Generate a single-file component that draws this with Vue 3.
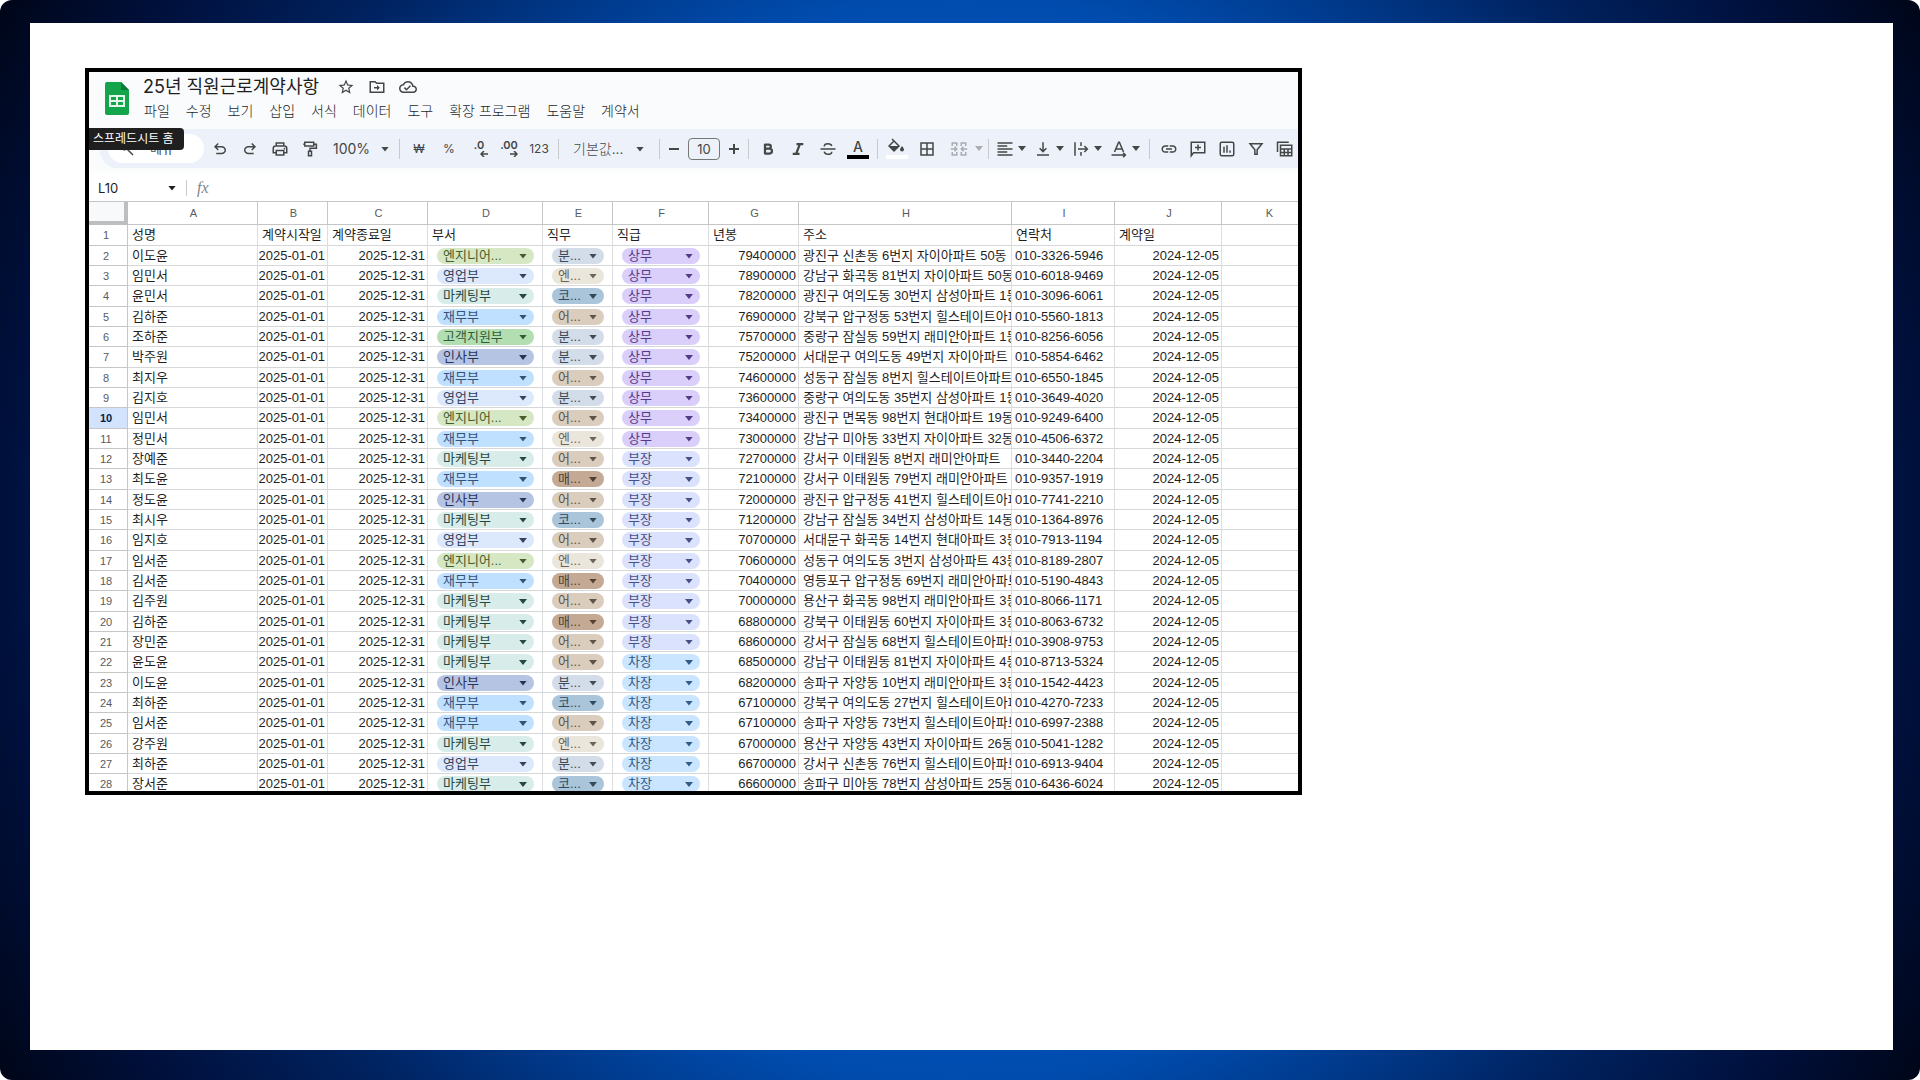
<script setup>
import { h } from 'vue'

const menus = ['파일', '수정', '보기', '삽입', '서식', '데이터', '도구', '확장 프로그램', '도움말', '계약서']

const icons = {
  star: { f: 'M22 9.24l-7.19-.62L12 2 9.19 8.63 2 9.24l5.46 4.73L5.82 21 12 17.27 18.18 21l-1.63-7.03L22 9.24zM12 15.4l-3.76 2.27 1-4.28-3.32-2.88 4.38-.38L12 6.1l1.71 4.04 4.38.38-3.32 2.88 1 4.28L12 15.4z' },
  move: { s: 'M3 5h6.5l2 2H21v12H3z', f: 'M12 9.2l3.8 3.8-3.8 3.8v-2.8H8v-2h4z' },
  cloud: { f: 'M19.35 10.04C18.67 6.59 15.64 4 12 4 9.11 4 6.6 5.64 5.35 8.04 2.34 8.36 0 10.91 0 14c0 3.31 2.69 6 6 6h13c2.76 0 5-2.24 5-5 0-2.64-2.05-4.78-4.65-4.96zM19 18H6c-2.21 0-4-1.79-4-4 0-2.05 1.53-3.76 3.56-3.97l1.07-.11.5-.95C8.08 7.14 9.94 6 12 6c2.62 0 4.88 1.86 5.39 4.43l.3 1.5 1.53.11c1.56.1 2.78 1.41 2.78 2.96 0 1.65-1.35 3-3 3zm-9-3.82l-2.09-2.09L6.5 13.5 10 17l6.01-6.01-1.41-1.41z' },
  search: { s: 'M12 12l8 8M13 8.5a4.5 4.5 0 1 1-9 0 4.5 4.5 0 0 1 9 0z' },
  undo: { f: 'M7 19v-2h7.1q1.575 0 2.738-1T18 13.5 16.838 11 14.1 10H7.8l2.6 2.6L9 14 4 9l5-5 1.4 1.4L7.8 8h6.3q2.425 0 4.163 1.575T20 13.5t-1.737 3.925T14.1 19z' },
  redo: { f: 'M17 19v-2H9.9q-1.575 0-2.738-1T6 13.5 7.162 11 9.9 10h6.3l-2.6 2.6L15 14l5-5-5-5-1.4 1.4L16.2 8H9.9Q7.475 8 5.737 9.575T4 13.5t1.737 3.925T9.9 19z' },
  print: { s: 'M7 8V4h10v4M7 17H3v-6q0-3 3-3h12q3 0 3 3v6h-4M7 14h10v6H7z', f: 'M17 10.5h2v2h-2z' },
  paint: { s: 'M5 3h12v5H5zM17 5.5h3.5V11H12v4M10 15h4v6h-4zM5 5.5H3' },
  bold: { s: 'M8 5v14M8 6h5a2.7 2.7 0 0 1 0 5.5H8M8 11.5h6a3.2 3.2 0 0 1 0 6.5H8', w: 3 },
  italic: { s: 'M10 5.5h9M5 18.5h9M14.5 5.5l-5 13', w: 3 },
  strike: { s: 'M2 12h20M17 8c-.5-2-2.5-3-5-3s-5 1-5 3.5M7 15.5c.5 2.5 2.5 3.5 5 3.5s5-1 5-3.5' },
  borders: { s: 'M4 4h16v16H4zM12 4v16M4 12h16' },
  merge: { s: 'M3 8V4h6v4M15 8V4h6v4M3 16v4h6v-4M15 16v4h6v-4M1 12h8M6 9l3 3-3 3M23 12h-8M18 9l-3 3 3 3' },
  align: { s: 'M2 4h20M2 8h13M2 12h20M2 16h13M2 20h20' },
  valign: { s: 'M4 20h16M12 3v12M7.5 11l4.5 4.5 4.5-4.5' },
  wrap: { s: 'M4 3v18M12 3v5M12 16v5M8 12h12M16.5 8l4 4-4 4' },
  rotate: { s: 'M6 16l5.5-13h1L18 16M8 12h8M2 20h18M17.5 17l3 3-3 3' },
  link: { f: 'M3.9 12c0-1.71 1.39-3.1 3.1-3.1h4V7H7c-2.76 0-5 2.24-5 5s2.24 5 5 5h4v-1.9H7c-1.71 0-3.1-1.39-3.1-3.1zM8 13h8v-2H8v2zm9-6h-4v1.9h4c1.71 0 3.1 1.39 3.1 3.1s-1.39 3.1-3.1 3.1h-4V17h4c2.76 0 5-2.24 5-5s-2.24-5-5-5z' },
  comment: { s: 'M3 21V3h18v14H6zM12 6v8M8 10h8' },
  chart: { s: 'M5 3h14q2 0 2 2v14q0 2-2 2H5q-2 0-2-2V5q0-2 2-2zM8 9v8M12 7v10M16 14v3' },
  filter: { s: 'M4 5h16l-6.5 8v6h-3v-6z' },
  views: { s: 'M2 16V3h15M6 7h15v14H6zM6 12h15M6 16.5h15M11 12v9M16 12v9' }
}

// One SVG wrapper shared by every toolbar glyph.
const Icon = ({ name }) => {
  const { f, s, w } = icons[name]
  return h('svg', { viewBox: '0 0 24 24', width: 18, height: 18, 'aria-hidden': 'true' }, [
    f && h('path', { d: f, fill: 'currentColor' }),
    s && h('path', { d: s, fill: 'none', stroke: 'currentColor', 'stroke-width': w || 2 })
  ])
}
Icon.props = ['name']

const history = ['undo', 'redo', 'print', 'paint']
const drops = ['align', 'valign', 'wrap', 'rotate']
const inserts = ['link', 'comment', 'chart', 'filter', 'views']

const deptTone = { '엔지니어...': 'lime', 영업부: 'sky', 마케팅부: 'mint', 재무부: 'azure', 고객지원부: 'green', 인사부: 'indigo' }
const jobTone = { '분...': 'steel', '엔...': 'cream', '코...': 'ocean', '어...': 'sand', '매...': 'brown' }
const rankTone = { 상무: 'violet', 부장: 'periwinkle', 차장: 'blue' }

const columns = ['A', 'B', 'C', 'D', 'E', 'F', 'G', 'H', 'I', 'J', 'K']
const titles = ['성명', '계약시작일', '계약종료일', '부서', '직무', '직급', '년봉', '주소', '연락처', '계약일', '']

const people = [
  ['이도윤', '엔지니어...', '분...', '상무', '79400000', '광진구 신촌동 6번지 자이아파트 50동', '010-3326-5946'],
  ['임민서', '영업부', '엔...', '상무', '78900000', '강남구 화곡동 81번지 자이아파트 50동', '010-6018-9469'],
  ['윤민서', '마케팅부', '코...', '상무', '78200000', '광진구 여의도동 30번지 삼성아파트 1동', '010-3096-6061'],
  ['김하준', '재무부', '어...', '상무', '76900000', '강북구 압구정동 53번지 힐스테이트아파트', '010-5560-1813'],
  ['조하준', '고객지원부', '분...', '상무', '75700000', '중랑구 잠실동 59번지 래미안아파트 1동', '010-8256-6056'],
  ['박주원', '인사부', '분...', '상무', '75200000', '서대문구 여의도동 49번지 자이아파트', '010-5854-6462'],
  ['최지우', '재무부', '어...', '상무', '74600000', '성동구 잠실동 8번지 힐스테이트아파트', '010-6550-1845'],
  ['김지호', '영업부', '분...', '상무', '73600000', '중랑구 여의도동 35번지 삼성아파트 1동', '010-3649-4020'],
  ['임민서', '엔지니어...', '어...', '상무', '73400000', '광진구 면목동 98번지 현대아파트 19동', '010-9249-6400'],
  ['정민서', '재무부', '엔...', '상무', '73000000', '강남구 미아동 33번지 자이아파트 32동', '010-4506-6372'],
  ['장예준', '마케팅부', '어...', '부장', '72700000', '강서구 이태원동 8번지 래미안아파트', '010-3440-2204'],
  ['최도윤', '재무부', '매...', '부장', '72100000', '강서구 이태원동 79번지 래미안아파트', '010-9357-1919'],
  ['정도윤', '인사부', '어...', '부장', '72000000', '광진구 압구정동 41번지 힐스테이트아파트', '010-7741-2210'],
  ['최시우', '마케팅부', '코...', '부장', '71200000', '강남구 잠실동 34번지 삼성아파트 14동', '010-1364-8976'],
  ['임지호', '영업부', '어...', '부장', '70700000', '서대문구 화곡동 14번지 현대아파트 3동', '010-7913-1194'],
  ['임서준', '엔지니어...', '엔...', '부장', '70600000', '성동구 여의도동 3번지 삼성아파트 43동', '010-8189-2807'],
  ['김서준', '재무부', '매...', '부장', '70400000', '영등포구 압구정동 69번지 래미안아파트', '010-5190-4843'],
  ['김주원', '마케팅부', '어...', '부장', '70000000', '용산구 화곡동 98번지 래미안아파트 3동', '010-8066-1171'],
  ['김하준', '마케팅부', '매...', '부장', '68800000', '강북구 이태원동 60번지 자이아파트 3동', '010-8063-6732'],
  ['장민준', '마케팅부', '어...', '부장', '68600000', '강서구 잠실동 68번지 힐스테이트아파트', '010-3908-9753'],
  ['윤도윤', '마케팅부', '어...', '차장', '68500000', '강남구 이태원동 81번지 자이아파트 4동', '010-8713-5324'],
  ['이도윤', '인사부', '분...', '차장', '68200000', '송파구 자양동 10번지 래미안아파트 3동', '010-1542-4423'],
  ['최하준', '재무부', '코...', '차장', '67100000', '강북구 여의도동 27번지 힐스테이트아파트', '010-4270-7233'],
  ['임서준', '재무부', '어...', '차장', '67100000', '송파구 자양동 73번지 힐스테이트아파트', '010-6997-2388'],
  ['강주원', '마케팅부', '엔...', '차장', '67000000', '용산구 자양동 43번지 자이아파트 26동', '010-5041-1282'],
  ['최하준', '영업부', '분...', '차장', '66700000', '강서구 신촌동 76번지 힐스테이트아파트', '010-6913-9404'],
  ['장서준', '마케팅부', '코...', '차장', '66600000', '송파구 미아동 78번지 삼성아파트 25동', '010-6436-6024']
].map(([name, dept, job, rank, pay, address, phone]) => ({
  name, pay, address, phone,
  chips: [
    { label: '부서', text: dept, tone: deptTone[dept] },
    { label: '직무', text: job, tone: jobTone[job] },
    { label: '직급', text: rank, tone: rankTone[rank] }
  ]
}))
</script>

<template>
  <div class="backdrop">
    <main class="slide">
      <section class="sheet">
        <header class="head">
          <a class="home" href="#" aria-label="스프레드시트 홈">
            <svg viewBox="0 0 24 33" width="24" height="33" aria-hidden="true">
              <path d="M2 0h14l8 8v23q0 2-2 2H2q-2 0-2-2V2q0-2 2-2z" fill="#12a54c" />
              <path d="M16 0l8 8h-8z" fill="#0b7c38" />
              <path d="M4 13h16v12H4zM6 15v3h5v-3zM13 15v3h5v-3zM6 20v3h5v-3zM13 20v3h5v-3z" fill="#e4f6ea" fill-rule="evenodd" />
            </svg>
          </a>
          <span class="tip" role="tooltip">스프레드시트 홈</span>
          <div class="heading">
            <div class="title-row">
              <h1>25년 직원근로계약사항</h1>
              <button type="button" aria-label="별표"><Icon name="star" /></button>
              <button type="button" aria-label="이동"><Icon name="move" /></button>
              <button type="button" aria-label="저장 상태"><Icon name="cloud" /></button>
            </div>
            <nav class="menus">
              <button v-for="m in menus" :key="m" type="button">{{ m }}</button>
            </nav>
          </div>
        </header>

        <div class="toolbar">
          <label class="finder">
            <Icon name="search" />
            <input type="text" placeholder="메뉴" aria-label="메뉴 검색">
          </label>
          <button v-for="n in history" :key="n" class="tool" type="button" :aria-label="n"><Icon :name="n" /></button>
          <span class="pick zoom"><select aria-label="확대/축소"><option>100%</option></select></span>
          <i class="rule"></i>
          <button class="tool glyph" type="button">₩</button>
          <button class="tool glyph" type="button">%</button>
          <button class="tool decimal" type="button">.0<svg viewBox="0 0 8 6" width="8" height="6"><path d="M8 3H1M4 0L1 3l3 3" fill="none" stroke="currentColor" stroke-width="1.5" /></svg></button>
          <button class="tool decimal" type="button">.00<svg viewBox="0 0 8 6" width="8" height="6"><path d="M0 3h7M4 0l3 3-3 3" fill="none" stroke="currentColor" stroke-width="1.5" /></svg></button>
          <button class="tool glyph" type="button">123</button>
          <i class="rule"></i>
          <span class="pick font"><select aria-label="글꼴"><option>기본값...</option></select></span>
          <i class="rule"></i>
          <button class="step" type="button" aria-label="글꼴 크기 줄이기"><svg viewBox="0 0 12 12" width="12" height="12"><path d="M1 6h10" stroke="currentColor" stroke-width="2" /></svg></button>
          <input class="size" type="text" value="10" aria-label="글꼴 크기">
          <button class="step" type="button" aria-label="글꼴 크기 늘리기"><svg viewBox="0 0 12 12" width="12" height="12"><path d="M1 6h10M6 1v10" stroke="currentColor" stroke-width="2" /></svg></button>
          <i class="rule"></i>
          <button class="tool" type="button" aria-label="굵게"><Icon name="bold" /></button>
          <button class="tool" type="button" aria-label="기울임꼴"><Icon name="italic" /></button>
          <button class="tool" type="button" aria-label="취소선"><Icon name="strike" /></button>
          <button class="tool swatch" type="button">A</button>
          <i class="rule"></i>
          <button class="tool swatch white" type="button" aria-label="채우기 색상">
            <svg viewBox="0 0 18 16" width="18" height="16"><path d="M4 1l7 7-5 5-5-5 5-5" fill="none" stroke="currentColor" stroke-width="1.5" /><path d="M1 8h10l-5 5z" fill="currentColor" /><path d="M14 8q2 2.5 2 3.5a2 2 0 0 1-4 0q0-1 2-3.5z" fill="currentColor" /></svg>
          </button>
          <button class="tool" type="button" aria-label="테두리"><Icon name="borders" /></button>
          <button class="drop merge" type="button" aria-label="셀 병합" disabled><Icon name="merge" /></button>
          <i class="rule"></i>
          <button v-for="n in drops" :key="n" class="drop" type="button" :aria-label="n"><Icon :name="n" /></button>
          <i class="rule"></i>
          <button v-for="n in inserts" :key="n" class="tool insert" type="button" :aria-label="n"><Icon :name="n" /></button>
        </div>

        <div class="formula">
          <span class="pick cell-name"><input type="text" value="L10" aria-label="이름 상자"></span>
          <i class="rule"></i>
          <label class="fx"><em>fx</em><input type="text" aria-label="수식"></label>
        </div>

        <div class="grid">
          <table>
            <colgroup>
              <col class="w-num"><col class="w-a"><col class="w-b"><col class="w-c"><col class="w-d"><col class="w-e">
              <col class="w-f"><col class="w-g"><col class="w-h"><col class="w-i"><col class="w-j"><col>
            </colgroup>
            <thead>
              <tr>
                <td class="corner"></td>
                <th v-for="c in columns" :key="c" scope="col">{{ c }}</th>
              </tr>
            </thead>
            <tbody>
              <tr>
                <th scope="row">1</th>
                <td v-for="(t, i) in titles" :key="i" class="label">{{ t }}</td>
              </tr>
              <tr v-for="(p, i) in people" :key="i">
                <th scope="row" :class="{ current: i === 8 }">{{ i + 2 }}</th>
                <td>{{ p.name }}</td>
                <td class="num">2025-01-01</td>
                <td class="num">2025-12-31</td>
                <td v-for="c in p.chips" :key="c.label" class="chip-cell">
                  <span class="chip" :class="c.tone"><select :aria-label="c.label"><option>{{ c.text }}</option></select></span>
                </td>
                <td class="num">{{ p.pay }}</td>
                <td>{{ p.address }}</td>
                <td class="tight">{{ p.phone }}</td>
                <td class="num">2024-12-05</td>
                <td></td>
              </tr>
            </tbody>
          </table>
        </div>
      </section>
    </main>
  </div>
</template>

<style>
body {
  margin: 0;
  background: #fff;
}
</style>

<style scoped>
.backdrop {
  box-sizing: border-box;
  display: flex;
  min-height: 100vh;
  padding: 23px 27px 30px 30px;
  border-radius: 12px;
  background: radial-gradient(circle at center, #0052bc 40%, #004cae 49%, #00225f 72%, #00103c 87%, #000618 100%);
  font-family: "Liberation Sans", "Noto Sans CJK KR", sans-serif;
  font-size: 13px;
  color: #1f1f1f;
}
.slide {
  box-sizing: border-box;
  flex: 1;
  min-width: 0;
  padding: 45px 55px;
  background: #fff;
}
.sheet {
  box-sizing: border-box;
  max-width: 1217px;
  overflow: hidden;
  border: 4px solid #000;
  background: #fff;
}
button, input, select {
  box-sizing: border-box;
  margin: 0;
  padding: 0;
  border: 0;
  background: none;
  color: inherit;
  font: inherit;
  outline: 0;
}
select {
  appearance: none;
}
svg {
  flex: none;
  display: block;
}

.head {
  position: relative;
  display: flex;
  gap: 14px;
  height: 57px;
  padding-left: 16px;
  background: #f9fbfd;
}
.home {
  padding-top: 10px;
}
.tip {
  position: absolute;
  z-index: 1;
  left: 0;
  top: 56px;
  padding: 0 10px 0 4px;
  border-radius: 0 4px 4px 0;
  background: #1f1f1f;
  color: #fff;
  font-size: 12px;
  line-height: 22px;
  white-space: nowrap;
}
.heading {
  padding-top: 1px;
}
.title-row {
  display: flex;
  align-items: center;
  gap: 13px;
  height: 28px;
  color: #444746;
}
h1 {
  margin: 0 5px 0 0;
  color: #1f1f1f;
  font: 400 18px/28px Inter, "Noto Sans CJK KR", sans-serif;
  white-space: nowrap;
}
.menus {
  display: flex;
  gap: 16px;
  padding-left: 1px;
  font-size: 14px;
  font-weight: 300;
  line-height: 20px;
  white-space: nowrap;
}

.toolbar {
  display: flex;
  align-items: center;
  height: 39px;
  padding-left: 19px;
  background: linear-gradient(#edf2fa, #edf2fa) right / calc(100% - 31px) 100% no-repeat, radial-gradient(circle at 31px 50%, #edf2fa 20px, #f9fbfd 21px);
  color: #444746;
}
.finder {
  box-sizing: border-box;
  flex: none;
  display: flex;
  align-items: center;
  gap: 14px;
  width: 96px;
  height: 29px;
  margin-right: 1px;
  padding-left: 10px;
  border-radius: 15px;
  background: #fff;
}
.finder input {
  width: 50px;
}
.finder input::placeholder {
  color: #444746;
}
.tool, .step, .drop {
  flex: none;
  display: flex;
  align-items: center;
  justify-content: center;
  height: 30px;
}
.tool {
  width: 30px;
}
.insert {
  width: 29px;
}
.glyph {
  font-family: Inter, "Noto Sans CJK KR", sans-serif;
  font-size: 12px;
}
.decimal {
  flex-direction: column;
  font: 600 11px/11px Inter, sans-serif;
}
.decimal svg {
  margin-left: 10px;
}
.pick {
  position: relative;
  flex: none;
}
.pick::after, .drop::after, .chip::after {
  content: "";
  width: 8px;
  height: 5px;
  background: currentColor;
  clip-path: polygon(0 0, 100% 0, 50% 100%);
}
.pick::after, .chip::after {
  position: absolute;
  top: 50%;
  margin-top: -2px;
  pointer-events: none;
}
.pick::after {
  right: 6px;
}
.pick select {
  width: 100%;
  height: 30px;
}
.zoom {
  width: 70px;
}
.zoom select {
  padding-left: 8px;
  font-family: Inter, sans-serif;
  font-size: 14px;
}
.font {
  width: 92px;
}
.font::after {
  right: 11px;
}
.font select {
  padding-left: 10px;
  font-size: 14px;
  font-weight: 300;
}
.rule {
  flex: none;
  width: 1px;
  height: 20px;
  margin: 0 4px;
  background: #c7c9cc;
}
.step {
  width: 20px;
}
.size {
  flex: none;
  width: 32px;
  height: 22px;
  margin: 0 4px;
  border: 1px solid #747775;
  border-radius: 4px;
  font-family: Inter, sans-serif;
  font-size: 13px;
  text-align: center;
}
.swatch {
  flex-direction: column;
  gap: 1px;
  font: 500 14px/15px Inter, sans-serif;
}
.swatch::after {
  content: "";
  width: 22px;
  height: 4px;
  background: #000;
}
.white::after {
  background: #fff;
}
.drop {
  justify-content: flex-start;
  gap: 4px;
  width: 38px;
  padding-left: 3px;
}
.merge {
  gap: 7px;
  width: 42px;
  padding-left: 8px;
  color: #a9abae;
}

.formula {
  box-sizing: border-box;
  display: flex;
  align-items: center;
  height: 33px;
  padding-top: 6px;
  background: linear-gradient(#f9fbfd, #fff 6px);
}
.cell-name {
  width: 93px;
  font-family: Inter, sans-serif;
}
.cell-name input {
  width: 70px;
  padding-left: 9px;
}
.formula .rule {
  height: 16px;
}
.fx {
  flex: 1;
  display: flex;
  padding-left: 6px;
  color: #80868b;
  font: italic 16px/20px "Liberation Serif", serif;
}
.fx input {
  flex: 1;
}

.grid {
  height: 590px;
  overflow: hidden;
}
table {
  width: calc(100% + 18px);
  table-layout: fixed;
  border-collapse: separate;
  border-spacing: 0;
  border-top: 1px solid #c4c7c5;
}
.w-num { width: 39px; }
.w-a { width: 130px; }
.w-b { width: 70px; }
.w-c { width: 100px; }
.w-d { width: 115px; }
.w-e { width: 70px; }
.w-f { width: 96px; }
.w-g { width: 90px; }
.w-h { width: 213px; }
.w-i { width: 103px; }
.w-j { width: 107px; }
th, td {
  box-sizing: border-box;
  height: 20px;
  padding: 0 2px 0 4px;
  overflow: hidden;
  border-right: 1px solid #dcdee0;
  border-bottom: 1px solid #d5d7d9;
  font-weight: 400;
  line-height: 18px;
  text-align: left;
  white-space: nowrap;
}
tbody tr:nth-child(3n + 1) > * {
  height: 21px;
}
thead th, .corner {
  height: 23px;
  border-color: #c4c7c5;
}
th {
  color: #575b5f;
  font-size: 11px;
  text-align: center;
}
tbody th {
  padding: 0 4px 0 0;
  border-color: #c4c7c5;
}
.corner {
  border-right: 4px solid #bcbec0;
  border-bottom: 4px solid #bcbec0;
  background: #f8f9fa;
}
.current {
  background: #d3e3fd;
  color: #041e49;
  font-weight: 700;
}
.num {
  padding: 0 2px 0 0;
  text-align: right;
}
.tight {
  padding-left: 3px;
}
.label {
  padding-right: 0;
}
.chip-cell {
  padding: 0 8px 0 9px;
}
.chip {
  position: relative;
  display: block;
  height: 16px;
  border-radius: 8px;
}
.chip::after {
  right: 7px;
}
.chip select {
  display: block;
  width: 100%;
  height: 16px;
  padding-left: 6px;
  line-height: 16px;
}
.lime { background: #d6e8c3; color: #455c2c; }
.sky { background: #dce9fc; color: #33425f; }
.mint { background: #d8edea; color: #26483e; }
.azure { background: #c0e0ff; color: #345178; }
.green { background: #b2deb2; color: #335c36; }
.indigo { background: #b6c4e3; color: #28335a; }
.steel { background: #d3dde9; color: #414b57; }
.cream { background: #ebe6dc; color: #6b645b; }
.ocean { background: #aac5da; color: #2f4b60; }
.sand { background: #dacdbe; color: #5f5347; }
.brown { background: #c4aa95; color: #523f30; }
.violet { background: #dacefb; color: #523a87; }
.periwinkle { background: #dbe2fd; color: #454f88; }
.blue { background: #c9e5ff; color: #315b88; }
</style>
